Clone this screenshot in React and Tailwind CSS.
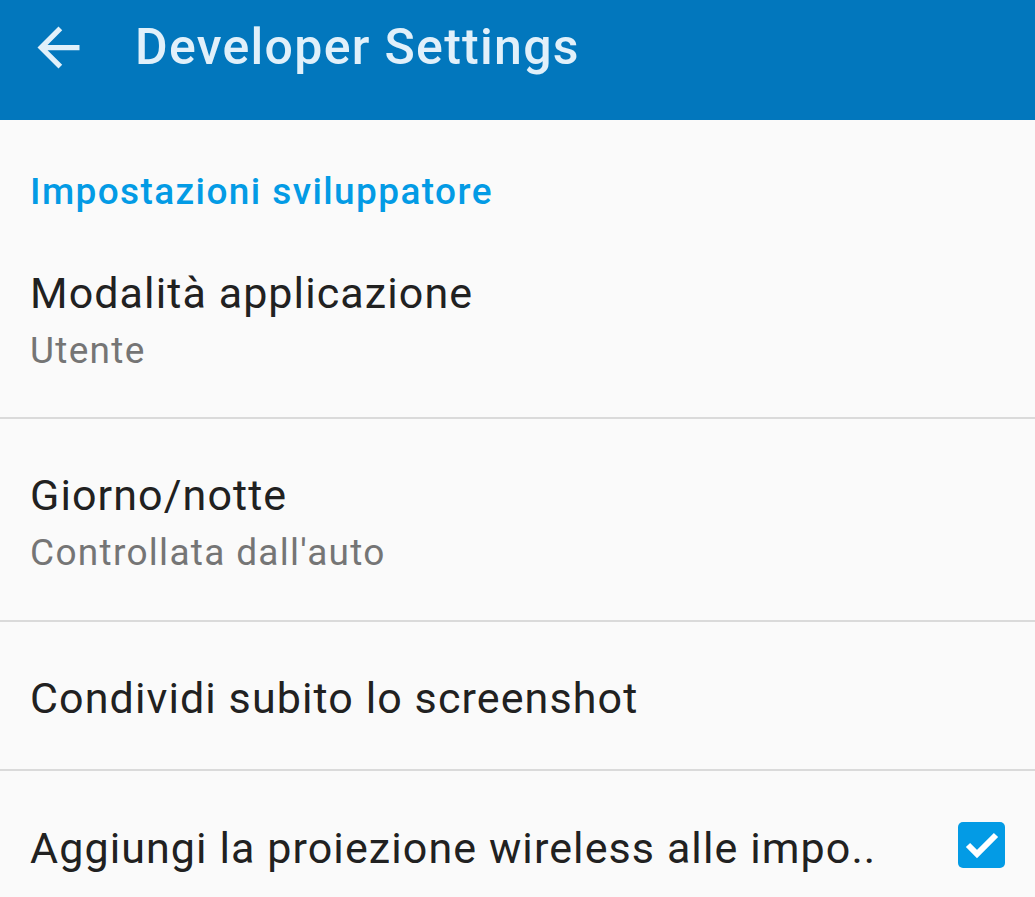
import React from "react";

function Row({ title, subtitle, pt = "pt-[55px]", pb = "pb-[49px]", right }) {
  return (
    <div className={`flex items-start justify-between pl-[30px] pr-[30px] ${pt} ${pb}`}>
      <div className="flex flex-col">
        <div className="text-[43px] leading-none tracking-[1.1px] text-[#212121] whitespace-nowrap">{title}</div>
        {subtitle && (
          <div className="mt-[17px] text-[37px] leading-none tracking-[1.3px] text-[#757575] whitespace-nowrap">{subtitle}</div>
        )}
      </div>
      {right}
    </div>
  );
}

function Divider() {
  return <div className="h-[2px] bg-[#dadada]" />;
}

export default function App() {
  return (
    <div
      className="w-[1035px] h-[897px] overflow-hidden bg-[#fafafa]"
      style={{ fontFamily: "Roboto, 'Noto Sans', sans-serif" }}
    >
      <div className="h-[120px] bg-[#0277bd] flex items-start">
        <svg
          className="ml-[27px] mt-[16px] shrink-0"
          width="63"
          height="63"
          viewBox="0 0 24 24"
          fill="#e1f0fa"
        >
          <path d="M20 11H7.83l5.59-5.59L12 4l-8 8 8 8 1.41-1.41L7.83 13H20v-2z" />
        </svg>
        <div className="ml-[45px] mt-[22px] text-[50px] leading-none font-medium tracking-[1.3px] text-[#e1f0fa] whitespace-nowrap">
          Developer Settings
        </div>
      </div>

      <div className="pt-[53px] pl-[30px] text-[37px] leading-none font-medium tracking-[1.4px] text-[#039be5]">
        Impostazioni sviluppatore
      </div>

      <Row title="Modalità applicazione" subtitle="Utente" pt="pt-[62px]" pb="pb-[48px]" />
      <Divider />
      <Row title="Giorno/notte" subtitle="Controllata dall'auto" pt="pt-[55px]" pb="pb-[49px]" />
      <Divider />
      <Row title="Condividi subito lo screenshot" pt="pt-[55px]" pb="pb-[49px]" />
      <Divider />
      <div className="flex items-start justify-between pl-[30px] pr-[30px]">
        <div className="pt-[56px] text-[43px] leading-none tracking-[1.1px] text-[#212121] whitespace-nowrap">
          Aggiungi la proiezione wireless alle impo..
        </div>
        <div className="mt-[51px] w-[47px] h-[46px] rounded-[5px] bg-[#039be5] flex items-center justify-center shrink-0">
          <svg width="47" height="46" viewBox="0 0 47 46">
            <polyline
              points="10,23 19,32 38,13"
              fill="none"
              stroke="#ffffff"
              strokeWidth="6"
              strokeLinecap="butt"
              strokeLinejoin="miter"
            />
          </svg>
        </div>
      </div>
    </div>
  );
}
